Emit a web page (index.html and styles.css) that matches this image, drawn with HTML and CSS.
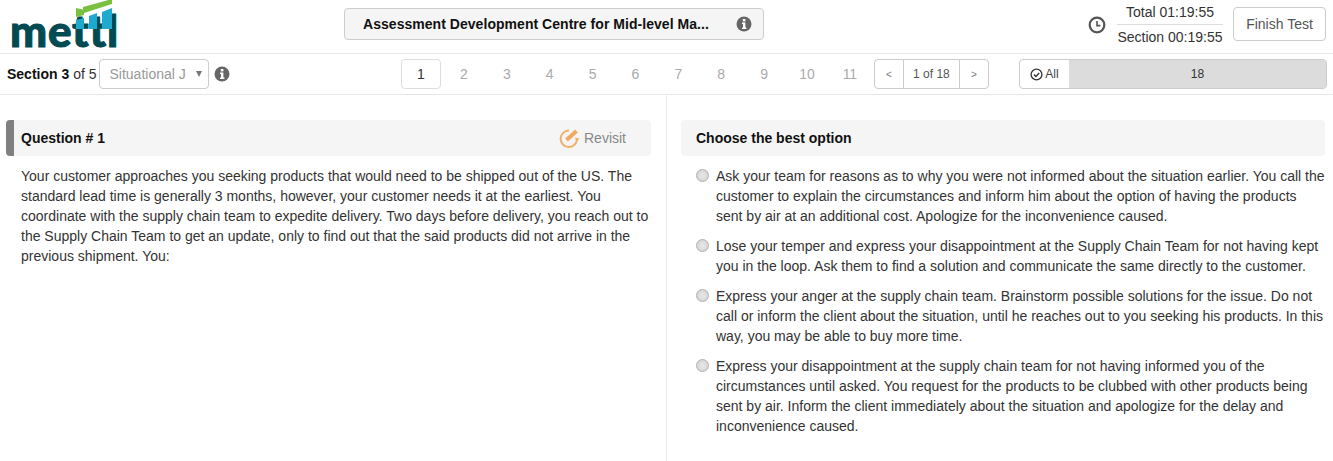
FILE: index.html
```html
<!DOCTYPE html>
<html lang="en">

<head>
    <meta charset="UTF-8">
    <meta name="viewport" content="width=device-width, initial-scale=1.0">
    <title>Mettl test</title>
    <link rel="stylesheet" href="styles.css">
</head>

<body>
    <div class="top">
        <div class="logo">
            <span class="logo-text">mettl</span>
            <svg class="logo-mark" width="125" height="30" viewBox="0 0 125 30">
                <path d="M76 29V20l8-2v11zM89 29V16l8-3v16zM102 29V12l10-4v21z" fill="#1fa9cf" />
                <path d="M76 8l7 1.5V7l29-8v5L84 13v2l-8 2z" fill="#7ac142" />
            </svg>
        </div>
        <div class="test-name">
            <span class="test-title">Assessment Development Centre for Mid-level Ma...</span>
            <svg class="info" width="16" height="16" viewBox="0 0 16 16">
                <circle cx="8" cy="8" r="7.5" fill="#666" />
                <rect x="6.8" y="3" width="2.6" height="2.4" fill="#fff" />
                <path d="M6 6.6h3.4v5h1v1.4H6v-1.4h1v-3.6H6z" fill="#fff" />
            </svg>
        </div>
        <div class="timer">
            <svg class="clock" width="18" height="18" viewBox="0 0 18 18">
                <circle cx="9" cy="9" r="7.3" fill="none" stroke="#555" stroke-width="2.2" />
                <path d="M9 5v4.6h3.4" fill="none" stroke="#555" stroke-width="1.6" />
            </svg>
            <div class="times">
                <div class="time-total">Total 01:19:55</div>
                <div class="time-section">Section 00:19:55</div>
            </div>
        </div>
        <button class="finish">Finish Test</button>
    </div>

    <div class="bar">
        <div class="section">
            <span class="section-label"><b>Section 3</b> of 5</span>
            <div class="select">
                <span class="select-text">Situational J</span>
                <span class="caret"></span>
            </div>
            <svg class="info" width="16" height="16" viewBox="0 0 16 16">
                <circle cx="8" cy="8" r="7.5" fill="#666" />
                <rect x="6.8" y="3" width="2.6" height="2.4" fill="#fff" />
                <path d="M6 6.6h3.4v5h1v1.4H6v-1.4h1v-3.6H6z" fill="#fff" />
            </svg>
        </div>
        <div class="pages">
            <span class="page current">1</span>
            <span class="page">2</span>
            <span class="page">3</span>
            <span class="page">4</span>
            <span class="page">5</span>
            <span class="page">6</span>
            <span class="page">7</span>
            <span class="page">8</span>
            <span class="page">9</span>
            <span class="page">10</span>
            <span class="page">11</span>
        </div>
        <div class="pager">
            <span class="pager-btn">&lt;</span>
            <span class="pager-count">1 of 18</span>
            <span class="pager-btn">&gt;</span>
        </div>
        <div class="filter">
            <span class="filter-all">
                <svg width="13" height="13" viewBox="0 0 13 13">
                    <circle cx="6.5" cy="6.5" r="5.4" fill="none" stroke="#333" stroke-width="1.3" />
                    <path d="M4 6.5l1.9 1.9L9.2 5" fill="none" stroke="#333" stroke-width="1.4" />
                </svg>
                All
            </span>
            <span class="filter-count">18</span>
        </div>
    </div>

    <div class="content">
        <div class="left">
            <div class="q-head">
                <span class="q-title">Question # 1</span>
                <span class="revisit">
                    <svg width="22" height="20" viewBox="0 0 22 20">
                        <path d="M11 2.6A8.2 8.2 0 1 0 19 11" fill="none" stroke="#f2b06c" stroke-width="2" />
                        <path d="M8.5 12L18.5 3" fill="none" stroke="#f2a95e" stroke-width="4" />
                        <path d="M17 9.5l4.5 1-3 3.5z" fill="#f2b06c" />
                    </svg>
                    Revisit
                </span>
            </div>
            <p class="q-text">Your customer approaches you seeking products that would need to be shipped out of the US. The standard lead time is generally 3 months, however, your customer needs it at the earliest. You coordinate with the supply chain team to expedite delivery. Two days before delivery, you reach out to the Supply Chain Team to get an update, only to find out that the said products did not arrive in the previous shipment. You:</p>
        </div>
        <div class="right">
            <div class="a-head">Choose the best option</div>
            <div class="option">
                <span class="radio"></span>
                <p>Ask your team for reasons as to why you were not informed about the situation earlier. You call the customer to explain the circumstances and inform him about the option of having the products sent by air at an additional cost. Apologize for the inconvenience caused.</p>
            </div>
            <div class="option">
                <span class="radio"></span>
                <p>Lose your temper and express your disappointment at the Supply Chain Team for not having kept you in the loop. Ask them to find a solution and communicate the same directly to the customer.</p>
            </div>
            <div class="option">
                <span class="radio"></span>
                <p>Express your anger at the supply chain team. Brainstorm possible solutions for the issue. Do not call or inform the client about the situation, until he reaches out to you seeking his products. In this way, you may be able to buy more time.</p>
            </div>
            <div class="option">
                <span class="radio"></span>
                <p>Express your disappointment at the supply chain team for not having informed you of the circumstances until asked. You request for the products to be clubbed with other products being sent by air. Inform the client immediately about the situation and apologize for the delay and inconvenience caused.</p>
            </div>
        </div>
    </div>
</body>

</html>
```

FILE: styles.css
```css
* {
    margin: 0;
    padding: 0;
    box-sizing: border-box;
    font-family: "Liberation Sans", Arial, sans-serif;
}

body {
    background-color: #fff;
    color: #333;
    font-size: 14px;
    overflow: hidden;
}

.top {
    height: 54px;
    display: flex;
    align-items: center;
    padding-bottom: 5px;
    border-bottom: 1px solid #e6e6e6;
}

.logo {
    position: relative;
    width: 344px;
    height: 53px;
    margin-bottom: -5px;
    padding-left: 10px;
    flex-shrink: 0;
}

.logo-text {
    display: block;
    font-family: "Lato", sans-serif;
    font-weight: 900;
    font-size: 44px;
    line-height: 53px;
    letter-spacing: 0.8px;
    -webkit-text-stroke: 1px #004a52;
    color: #004a52;
    padding-top: 4px;
}

.logo-mark {
    position: absolute;
    left: 0;
    top: 0;
}

.test-name {
    width: 420px;
    height: 32px;
    display: flex;
    align-items: center;
    justify-content: space-between;
    padding: 0 11px 0 18px;
    background-color: #f5f5f5;
    border: 1px solid #ccc;
    border-radius: 4px;
}

.test-title {
    font-weight: bold;
    font-size: 14px;
    letter-spacing: 0.04px;
    color: #111;
}

.timer {
    margin-left: auto;
    display: flex;
    align-items: center;
    gap: 11px;
}

.clock {
    margin-top: 2px;
}

.times {
    width: 106px;
    text-align: center;
    line-height: 24px;
}

.time-total {
    border-bottom: 1px solid #ddd;
}

.time-section {
    white-space: nowrap;
}

.finish {
    width: 93px;
    height: 34px;
    margin-left: 10px;
    margin-right: 7px;
    background-color: #fff;
    border: 1px solid #ccc;
    border-radius: 4px;
    font-size: 14px;
    color: #555;
}

.bar {
    height: 41px;
    display: flex;
    align-items: center;
    border-bottom: 1px solid #e6e6e6;
}

.section {
    width: 401px;
    display: flex;
    align-items: center;
    padding-left: 7px;
    flex-shrink: 0;
}

.section-label {
    color: #333;
    margin-right: 2px;
}

.section-label b {
    color: #111;
}

.select {
    width: 110px;
    height: 30px;
    display: flex;
    align-items: center;
    justify-content: space-between;
    padding: 0 6px 0 10px;
    border: 1px solid #ccc;
    border-radius: 4px;
    color: #999;
}

.caret {
    width: 0;
    height: 0;
    border-left: 3px solid transparent;
    border-right: 3px solid transparent;
    border-top: 6px solid #777;
}

.section .info {
    margin-left: 5px;
}

.pages {
    display: flex;
    gap: 2.9px;
}

.page {
    width: 40px;
    height: 30px;
    display: flex;
    align-items: center;
    justify-content: center;
    color: #aaa;
    border: 1px solid transparent;
    border-radius: 4px;
}

.page.current {
    color: #333;
    border-color: #ddd;
}

.pager {
    width: 115px;
    height: 30px;
    margin-left: 4px;
    display: flex;
    border: 1px solid #ccc;
    border-radius: 4px;
    font-size: 12px;
    color: #555;
}

.pager-btn {
    width: 28px;
    display: flex;
    align-items: center;
    justify-content: center;
    font-size: 10px;
    color: #777;
}

.pager-count {
    flex: 1;
    display: flex;
    align-items: center;
    justify-content: center;
    border-left: 1px solid #ccc;
    border-right: 1px solid #ccc;
}

.filter {
    width: 308px;
    height: 30px;
    margin-left: 30px;
    display: flex;
    border: 1px solid #ccc;
    border-radius: 4px;
    font-size: 12px;
}

.filter-all {
    width: 49px;
    display: flex;
    align-items: center;
    justify-content: center;
    gap: 2px;
    color: #444;
}

.filter-count {
    flex: 1;
    display: flex;
    align-items: center;
    justify-content: center;
    background-color: #dcdcdc;
    color: #333;
}

.content {
    display: flex;
    height: 366px;
}

.left {
    width: 667px;
    padding: 25px 15px 0 6px;
    border-right: 1px solid #eee;
}

.q-head {
    height: 36px;
    display: flex;
    align-items: center;
    justify-content: space-between;
    padding: 0 25px 0 7px;
    background-color: #f5f5f5;
    border-left: 8px solid #808080;
    border-radius: 4px;
}

.q-title,
.a-head {
    font-weight: bold;
    color: #111;
}

.revisit {
    display: flex;
    align-items: center;
    gap: 4px;
    color: #888;
}

.q-text {
    margin-top: 10px;
    padding-left: 15px;
    line-height: 20px;
}

.right {
    flex: 1;
    padding: 25px 8px 0 14px;
}

.a-head {
    height: 36px;
    display: flex;
    align-items: center;
    padding-left: 15px;
    margin-bottom: 10px;
    background-color: #f5f5f5;
    border-radius: 4px;
}

.option {
    display: flex;
    padding-left: 15px;
    margin-bottom: 10px;
    line-height: 20px;
}

.radio {
    width: 13px;
    height: 13px;
    flex-shrink: 0;
    margin-top: 3px;
    margin-right: 7px;
    border: 1px solid #b0b0b0;
    border-radius: 50%;
    background-image: radial-gradient(#e8e8e8, #d0d0d0);
}
```
